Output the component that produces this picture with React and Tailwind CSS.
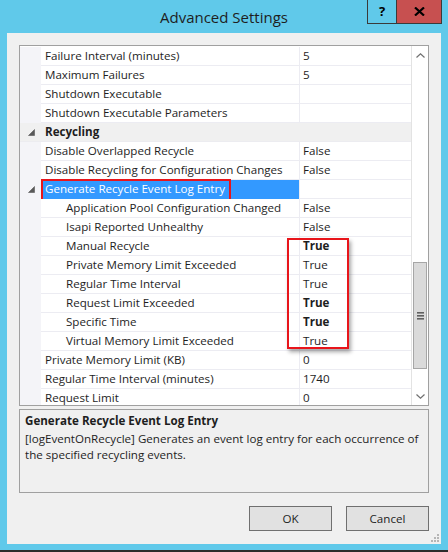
import React from "react";

const rows = [
  { name: "Failure Interval (minutes)", value: "5" },
  { name: "Maximum Failures", value: "5" },
  { name: "Shutdown Executable", value: "" },
  { name: "Shutdown Executable Parameters", value: "" },
  { name: "Recycling", category: true },
  { name: "Disable Overlapped Recycle", value: "False" },
  { name: "Disable Recycling for Configuration Changes", value: "False" },
  { name: "Generate Recycle Event Log Entry", value: "", selected: true, group: true },
  { name: "Application Pool Configuration Changed", value: "False", child: true },
  { name: "Isapi Reported Unhealthy", value: "False", child: true },
  { name: "Manual Recycle", value: "True", child: true, bold: true },
  { name: "Private Memory Limit Exceeded", value: "True", child: true },
  { name: "Regular Time Interval", value: "True", child: true },
  { name: "Request Limit Exceeded", value: "True", child: true, bold: true },
  { name: "Specific Time", value: "True", child: true, bold: true },
  { name: "Virtual Memory Limit Exceeded", value: "True", child: true },
  { name: "Private Memory Limit (KB)", value: "0" },
  { name: "Regular Time Interval (minutes)", value: "1740" },
  { name: "Request Limit", value: "0" },
];

function Expander() {
  return (
    <svg width="7" height="7" viewBox="0 0 7 7">
      <polygon points="6.5,0.5 6.5,6.5 0.5,6.5" fill="#595959" stroke="#595959" strokeWidth="0.6" />
    </svg>
  );
}

function Row({ row }) {
  if (row.category) {
    return (
      <div className="flex h-[19px] shrink-0 bg-[#f0f0f0] border-b border-[#ececf0]">
        <div className="w-[21px] flex items-center justify-center pl-[2px]">
          <Expander />
        </div>
        <div className="flex items-center pl-[4px] font-bold text-[#1e1e1e]">{row.name}</div>
      </div>
    );
  }
  return (
    <div className="relative flex h-[19px] shrink-0">
      <div className="w-[21px] bg-[#f4f4f8] flex items-center justify-center pl-[2px]">
        {row.group && <Expander />}
      </div>
      <div
        className={
          row.selected
            ? "w-[258px] flex items-center bg-[#3399ff] text-white border-b border-[#3399ff] pl-[4px]"
            : "w-[258px] flex items-center bg-white border-b border-[#ececf2] " + (row.child ? "pl-[25px]" : "pl-[4px]")
        }
      >
        {row.name}
      </div>
      <div className="flex-1 flex items-center bg-white border-l border-[#ececf2] border-b pl-[3px]">
        <span className={row.bold ? "font-bold" : ""}>{row.value}</span>
      </div>
      {row.selected && (
        <div className="absolute left-[21px] top-[-1px] w-[190px] h-[22px] border-2 border-[#e8151b]" />
      )}
    </div>
  );
}

export default function App() {
  return (
    <div
      className="w-[448px] h-[552px] bg-[#60c9ea] flex flex-col border-b-2 border-[#2b2b2b] text-[11.6px] text-[#1e1e1e]"
      style={{ fontFamily: "'Segoe UI', 'Open Sans', sans-serif" }}
    >
      {/* title bar */}
      <div className="relative h-[33px] shrink-0 flex items-center justify-center">
        <span className="text-[15px] text-[#1e1e1e] pt-[1px]">Advanced Settings</span>
        <div className="absolute right-[6px] top-0 flex h-[24px] border border-t-0 border-[#3a3a3a]">
          <div className="w-[29px] flex items-center justify-center font-bold text-[13px] text-black border-r border-[#3a3a3a]">?</div>
          <div className="w-[44px] flex items-center justify-center bg-[#c75050]">
            <svg width="11" height="9" viewBox="0 0 11 9">
              <path d="M1 0.5 L10 8.5 M10 0.5 L1 8.5" stroke="#000" strokeWidth="2.2" />
            </svg>
          </div>
        </div>
      </div>

      {/* client */}
      <div className="flex-1 mx-[7px] mb-[6px] bg-[#f0f0f0] flex flex-col px-[12px] pt-[12px]">
        {/* property grid */}
        <div className="relative h-[361px] shrink-0 border border-[#a0a0a0] bg-white flex overflow-hidden">
          <div className="flex-1 flex flex-col overflow-hidden pt-px">
            {rows.map((r) => (
              <Row key={r.name} row={r} />
            ))}
          </div>
          {/* scrollbar */}
          <div className="w-[17px] shrink-0 bg-white border-l border-[#e3e3e3] flex flex-col">
            <div className="h-[18px] flex items-center justify-center">
              <svg width="9" height="5" viewBox="0 0 9 5">
                <path d="M0.5 4.5 L4.5 0.8 L8.5 4.5" fill="none" stroke="#707070" strokeWidth="1.2" />
              </svg>
            </div>
            <div className="h-[198px]" />
            <div className="h-[107px] mx-px bg-[#dadada] border border-[#a6a6a6] flex items-center justify-center">
              <svg width="7" height="8" viewBox="0 0 7 8">
                <rect x="0" y="0" width="7" height="1.6" fill="#606060" />
                <rect x="0" y="3" width="7" height="1.6" fill="#606060" />
                <rect x="0" y="6" width="7" height="1.6" fill="#606060" />
              </svg>
            </div>
            <div className="flex-1" />
            <div className="h-[18px] flex items-center justify-center">
              <svg width="9" height="5" viewBox="0 0 9 5">
                <path d="M0.5 0.5 L4.5 4.2 L8.5 0.5" fill="none" stroke="#707070" strokeWidth="1.2" />
              </svg>
            </div>
          </div>
          {/* annotation box around values */}
          <div className="absolute left-[267px] top-[192px] w-[62px] h-[111px] border-2 border-[#e8151b] shadow-[2px_3px_4px_rgba(0,0,0,0.35)]" />
        </div>

        {/* description */}
        <div className="mt-[3px] h-[84px] shrink-0 border border-[#a0a0a0] px-[5px] pt-[2px]">
          <div className="font-bold leading-[18px]">Generate Recycle Event Log Entry</div>
          <div className="leading-[16px] mt-[1px]">
            [logEventOnRecycle] Generates an event log entry for each occurrence of the specified recycling events.
          </div>
        </div>

        {/* buttons */}
        <div className="flex justify-end gap-[14px] mt-[13px]">
          <button className="w-[83px] h-[25px] bg-[#e1e1e1] border border-[#707070] text-[#1e1e1e]">OK</button>
          <button className="w-[83px] h-[25px] bg-[#e1e1e1] border border-[#707070] text-[#1e1e1e]">Cancel</button>
        </div>
        <div className="flex-1 flex justify-end items-end pb-[2px] mr-[-10px]">
          <svg width="9" height="9" viewBox="0 0 9 9">
            <g fill="#b5b5b5">
              <rect x="7" y="1" width="2" height="2" />
              <rect x="4" y="4" width="2" height="2" />
              <rect x="7" y="4" width="2" height="2" />
              <rect x="1" y="7" width="2" height="2" />
              <rect x="4" y="7" width="2" height="2" />
              <rect x="7" y="7" width="2" height="2" />
            </g>
          </svg>
        </div>
      </div>
    </div>
  );
}
